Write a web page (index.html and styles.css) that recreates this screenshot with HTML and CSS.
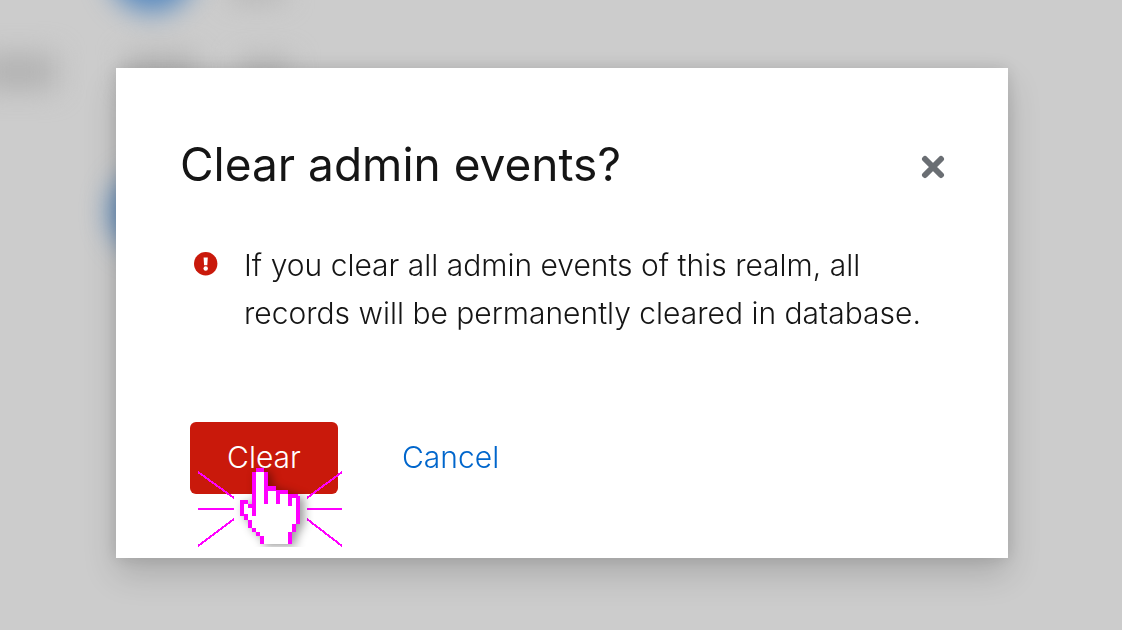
FILE: index.html
```
<!DOCTYPE html>
<html lang="en">
<head>
<meta charset="utf-8">
<title>Clear admin events</title>
<link rel="stylesheet" href="styles.css">
</head>
<body>
<div class="backdrop" aria-hidden="true">
  <span class="blob blob-top"></span>
  <span class="blob blob-left"></span>
  <span class="smudge smudge-nav"></span>
  <span class="smudge smudge-tab"></span>
  <span class="smudge smudge-next"></span>
  <span class="smudge smudge-label"></span>
</div>
<main class="dialog" role="dialog" aria-labelledby="title" aria-describedby="message">
  <header class="dialog-header">
    <h1 class="title" id="title">Clear admin events?</h1>
    <button class="close" type="button" aria-label="Close">
      <svg class="close-icon" viewBox="0 0 24 24"><path d="M4 4L20 20M20 4L4 20"/></svg>
    </button>
  </header>
  <div class="alert">
    <svg class="alert-icon" viewBox="0 0 24 24" aria-hidden="true">
      <circle cx="11.7" cy="11.7" r="11.7" fill="#c9190b"/>
      <path d="M9.6 5.4h4.2l-.5 7.8h-3.2z" fill="#fff"/>
      <circle cx="11.7" cy="16.5" r="2.2" fill="#fff"/>
    </svg>
    <p class="message" id="message">If you clear all admin events of this realm, all records will be permanently cleared in database.</p>
  </div>
  <footer class="actions">
    <div class="primary">
      <button class="button danger" type="button">Clear</button>
      <svg class="pointer" viewBox="0 0 148 80" aria-hidden="true">
        <g class="rays" shape-rendering="crispEdges">
          <path d="M3 5L39 31M3 42H39M3 79L39 52M147 5L112 31M147 42H112M147 79L112 52"/>
        </g>
        <g class="hand" shape-rendering="crispEdges">
          <path d="M61 5H69V23H81V27H93V31H101V57H97V65H93V77H69V69H65V65H61V61H57V53H53V47H49V37H53V41H61Z" fill="#fff"/>
          <path d="M61 1H69V5H61ZM57 5H61V49H57ZM69 5H73V37H69ZM73 19H81V24H73ZM81 23H93V27H81ZM81 27H85V37H81ZM93 27H103V31H93ZM93 31H97V39H93ZM101 29H105V57H101ZM97 57H101V65H97ZM93 65H97V77H93ZM45 33H53V37H45ZM45 37H49V49H45ZM53 37H57V41H53ZM49 47H53V53H49ZM53 53H57V61H53ZM57 61H61V65H57ZM61 65H65V69H61ZM65 69H69V77H65Z" fill="#f0f"/>
        </g>
      </svg>
    </div>
    <button class="button link" type="button">Cancel</button>
  </footer>
</main>
</body>
</html>
```
FILE: styles.css
```
* { box-sizing: border-box; }
body {
  margin: 0;
  min-height: 100vh;
  padding: 68px 114px 72px 116px;
  background: #ccc;
  color: #151515;
  font-family: Inter, Lato, sans-serif;
}
.backdrop { position: fixed; inset: 0; overflow: hidden; }
.blob { position: absolute; border-radius: 50%; background: #5488c0; filter: blur(14px); }
.blob-top { left: 108px; top: -76px; width: 88px; height: 88px; }
.blob-left { left: 110px; top: 170px; width: 84px; height: 84px; }
.smudge { position: absolute; background: #b2b2b2; filter: blur(14px); }
.smudge-nav { left: -20px; top: 54px; width: 76px; height: 36px; }
.smudge-tab { left: 126px; top: 54px; width: 70px; height: 28px; }
.smudge-next { left: 240px; top: 58px; width: 50px; height: 20px; }
.smudge-label { left: 230px; top: -20px; width: 54px; height: 20px; }
.dialog {
  position: relative;
  min-height: 490px;
  padding: 64px;
  background: #fff;
  box-shadow: 0 16px 32px rgba(3, 3, 3, .16), 0 0 16px rgba(3, 3, 3, .12);
}
.dialog-header { display: flex; justify-content: space-between; align-items: center; }
.title { margin: 0; font-size: 46px; line-height: 64px; font-weight: 400; }
.close { width: 24px; height: 24px; margin: 6px -1px 0 0; padding: 0; border: 0; background: none; }
.close-icon { display: block; width: 24px; height: 24px; fill: none; stroke: #6a6e73; stroke-width: 6; stroke-linecap: round; }
.alert { display: flex; gap: 26px; padding: 45px 0 0 14px; }
.alert-icon { flex: none; width: 24px; height: 24px; margin-top: 11px; }
.message { margin: 0; font-size: 30px; line-height: 48px; font-weight: 350; }
.actions { display: flex; gap: 64px; margin-top: 85px; padding-left: 10px; }
.primary { position: relative; }
.button { height: 72px; padding: 0 0 2px; border: 0; font-family: inherit; font-size: 30px; font-weight: 350; line-height: 48px; }
.danger { width: 148px; border-radius: 6px; background: #c9190b; color: #fff; }
.link { background: none; color: #06c; }
.pointer { position: absolute; left: 5px; top: 45px; width: 148px; height: 80px; pointer-events: none; }
.rays { fill: none; stroke: #f0f; stroke-width: 2; }
.hand { filter: drop-shadow(4px 2px 5px rgba(0, 0, 0, .4)); }
```
